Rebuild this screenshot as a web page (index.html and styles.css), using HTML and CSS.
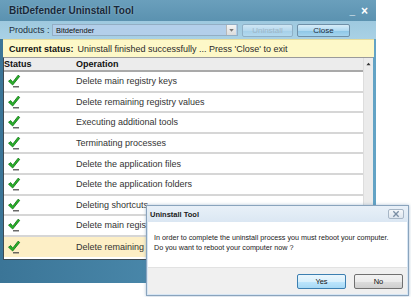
FILE: index.html
```html
<!DOCTYPE html>
<html>
<head>
  <title>BitDefender Uninstall Tool</title>
  <link rel="stylesheet" href="styles.css">
</head>
<body>
  <div class="app">
    <div class="titlebar">
      <span class="app-title">BitDefender Uninstall Tool</span>
      <span class="win-ctrl">_</span>
      <span class="win-ctrl close-x">&#215;</span>
    </div>

    <div class="toolbar">
      <span class="tb-label">Products :</span>
      <div class="combo">
        <span class="combo-text">Bitdefender</span>
        <span class="combo-arrow">
          <svg viewBox="0 0 8 8"><path d="M2 3h4l-2 2.5z" fill="#777"/></svg>
        </span>
      </div>
      <button class="btn disabled">Uninstall</button>
      <button class="btn">Close</button>
    </div>

    <div class="status-strip">
      <b>Current status:</b> Uninstall finished successfully ... Press 'Close' to exit
    </div>

    <div class="list-frame">
      <div class="list">
        <div class="list-head">
          <span class="col-status">Status</span>
          <span>Operation</span>
        </div>
        <div class="row"><span class="col-status"><svg class="check" viewBox="0 0 14 14"><path d="M1.5 7.2l2.2-1.6 2 2.6 5.4-7 1.6 1.2-7 8.6z" fill="#2ab52a" stroke="#0c6e12" stroke-width="0.8" stroke-linejoin="round"/><path d="M6 12.8h6" stroke="#444" stroke-width="1.2"/></svg></span><span>Delete main registry keys</span></div>
        <div class="row"><span class="col-status"><svg class="check" viewBox="0 0 14 14"><path d="M1.5 7.2l2.2-1.6 2 2.6 5.4-7 1.6 1.2-7 8.6z" fill="#2ab52a" stroke="#0c6e12" stroke-width="0.8" stroke-linejoin="round"/><path d="M6 12.8h6" stroke="#444" stroke-width="1.2"/></svg></span><span>Delete remaining registry values</span></div>
        <div class="row"><span class="col-status"><svg class="check" viewBox="0 0 14 14"><path d="M1.5 7.2l2.2-1.6 2 2.6 5.4-7 1.6 1.2-7 8.6z" fill="#2ab52a" stroke="#0c6e12" stroke-width="0.8" stroke-linejoin="round"/><path d="M6 12.8h6" stroke="#444" stroke-width="1.2"/></svg></span><span>Executing additional tools</span></div>
        <div class="row"><span class="col-status"><svg class="check" viewBox="0 0 14 14"><path d="M1.5 7.2l2.2-1.6 2 2.6 5.4-7 1.6 1.2-7 8.6z" fill="#2ab52a" stroke="#0c6e12" stroke-width="0.8" stroke-linejoin="round"/><path d="M6 12.8h6" stroke="#444" stroke-width="1.2"/></svg></span><span>Terminating processes</span></div>
        <div class="row"><span class="col-status"><svg class="check" viewBox="0 0 14 14"><path d="M1.5 7.2l2.2-1.6 2 2.6 5.4-7 1.6 1.2-7 8.6z" fill="#2ab52a" stroke="#0c6e12" stroke-width="0.8" stroke-linejoin="round"/><path d="M6 12.8h6" stroke="#444" stroke-width="1.2"/></svg></span><span>Delete the application files</span></div>
        <div class="row"><span class="col-status"><svg class="check" viewBox="0 0 14 14"><path d="M1.5 7.2l2.2-1.6 2 2.6 5.4-7 1.6 1.2-7 8.6z" fill="#2ab52a" stroke="#0c6e12" stroke-width="0.8" stroke-linejoin="round"/><path d="M6 12.8h6" stroke="#444" stroke-width="1.2"/></svg></span><span>Delete the application folders</span></div>
        <div class="row"><span class="col-status"><svg class="check" viewBox="0 0 14 14"><path d="M1.5 7.2l2.2-1.6 2 2.6 5.4-7 1.6 1.2-7 8.6z" fill="#2ab52a" stroke="#0c6e12" stroke-width="0.8" stroke-linejoin="round"/><path d="M6 12.8h6" stroke="#444" stroke-width="1.2"/></svg></span><span>Deleting shortcuts</span></div>
        <div class="row"><span class="col-status"><svg class="check" viewBox="0 0 14 14"><path d="M1.5 7.2l2.2-1.6 2 2.6 5.4-7 1.6 1.2-7 8.6z" fill="#2ab52a" stroke="#0c6e12" stroke-width="0.8" stroke-linejoin="round"/><path d="M6 12.8h6" stroke="#444" stroke-width="1.2"/></svg></span><span>Delete main registry keys</span></div>
        <div class="row selected"><span class="col-status"><svg class="check" viewBox="0 0 14 14"><path d="M1.5 7.2l2.2-1.6 2 2.6 5.4-7 1.6 1.2-7 8.6z" fill="#2ab52a" stroke="#0c6e12" stroke-width="0.8" stroke-linejoin="round"/><path d="M6 12.8h6" stroke="#444" stroke-width="1.2"/></svg></span><span>Delete remaining registry values</span></div>
      </div>
      <div class="scrollbar">
        <svg class="scroll-up" viewBox="0 0 6 4"><path d="M0.5 3.5h5l-2.5-3z" fill="#333"/></svg>
      </div>
    </div>
  </div>

  <div class="dialog">
    <div class="dlg-title">
      <span class="dlg-caption">Uninstall Tool</span>
      <span class="dlg-close">
        <svg viewBox="0 0 8 6"><path d="M2 1l4 4M6 1l-4 4" stroke="#7a8ea4" stroke-width="1"/></svg>
      </span>
    </div>
    <div class="dlg-body">
      <p>In order to complete the uninstall process you must reboot your computer.</p>
      <p>Do you want to reboot your computer now ?</p>
    </div>
    <div class="dlg-footer">
      <button class="dlg-btn default">Yes</button>
      <button class="dlg-btn">No</button>
    </div>
  </div>
</body>
</html>
```

FILE: styles.css
```css
body {
  margin: 0;
  width: 411px;
  height: 297px;
  position: relative;
  overflow: hidden;
  background: #ffffff;
  font-family: "Liberation Sans", Arial, sans-serif;
  font-size: 9px;
  color: #222;
}

.app {
  width: 376px;
  height: 283px;
  display: flex;
  flex-direction: column;
  background: linear-gradient(to right, #3b7597, #4f8fb2 60%, #63a3c5);
}

.titlebar {
  height: 21px;
  display: flex;
  align-items: center;
  padding: 0 8px 0 9px;
  background: linear-gradient(#6a9fbc, #5b92b0);
  box-sizing: border-box;
}

.app-title {
  flex-grow: 1;
  font-size: 10px;
  font-weight: bold;
  color: #16283a;
  text-shadow: 0 0 2px rgba(255,255,255,0.4);
}

.win-ctrl {
  color: #fff;
  font-weight: bold;
  font-size: 10px;
  margin-left: 6px;
}

.close-x {
  font-size: 12px;
}

.toolbar {
  height: 18px;
  display: flex;
  align-items: center;
  padding: 0 0 0 9px;
  background: linear-gradient(#9ec9df, #a9d1e5);
  box-sizing: border-box;
}

.tb-label {
  width: 43px;
  color: #1e2e3c;
}

.combo {
  width: 186px;
  height: 12px;
  display: flex;
  align-items: center;
  background: #b3cfea;
  border: 1px solid #93aec4;
  box-sizing: border-box;
}

.combo-text {
  flex-grow: 1;
  padding-left: 3px;
  font-size: 7.5px;
  color: #111;
}

.combo-arrow {
  width: 9px;
  height: 10px;
  margin-right: 1px;
  background: linear-gradient(#f4f4f4, #dcdcdc);
  border-left: 1px solid #b8b8b8;
}

.combo-arrow svg {
  display: block;
  width: 9px;
  height: 10px;
}

.btn {
  height: 13px;
  width: 53px;
  margin-left: 4px;
  padding: 0;
  font-family: "Liberation Sans", Arial, sans-serif;
  font-size: 8px;
  color: #1c2c3c;
  border: 1px solid #6f90a8;
  border-radius: 2px;
  background: linear-gradient(#d7ecf8, #b1daf1 50%, #8cc6e6 51%, #a6d4ee);
}

.btn.disabled {
  width: 51px;
  color: #9fb6c6;
  border-color: #8fb0c6;
  background: linear-gradient(#cfe6f4, #b6d9ee 50%, #a4cfe9 51%, #b4d9ee);
}

.status-strip {
  height: 18px;
  margin: 0 2px 0 3px;
  padding-left: 6px;
  display: flex;
  align-items: center;
  gap: 4px;
  background: #fdf8c8;
  border-top: 1px solid #e6dc9c;
  box-sizing: border-box;
  white-space: nowrap;
  color: #2a2a2a;
}

.status-strip b {
  color: #111;
}

.list-frame {
  height: 203px;
  margin: 0 3px 0 3px;
  display: flex;
  background: #fff;
  border-left: 1px solid #3e4a52;
  border-bottom: 1px solid #3e4a52;
  border-top: 1px solid #9a9a9a;
  box-sizing: border-box;
}

.list {
  flex-grow: 1;
  display: flex;
  flex-direction: column;
}

.list-head {
  height: 14px;
  display: flex;
  align-items: center;
  font-weight: bold;
  color: #111;
  background: #ececec;
  border-bottom: 2px solid #a9a9a9;
  box-sizing: border-box;
}

.col-status {
  width: 72px;
  flex-shrink: 0;
  display: flex;
  align-items: center;
}

.row {
  height: 20.6px;
  display: flex;
  align-items: center;
  border-bottom: 2px solid #d6d6d6;
  box-sizing: border-box;
  color: #333;
  white-space: nowrap;
  overflow: hidden;
}

.row.selected {
  background: #fdefc6;
  border-bottom: none;
}

.check {
  width: 14px;
  height: 14px;
  margin-left: 3px;
}

.scrollbar {
  width: 9px;
  flex-shrink: 0;
  background: #ebebeb;
  border-left: 1px solid #dddddd;
}

.scroll-up {
  display: block;
  width: 5px;
  height: 4px;
  margin: 4px auto 0;
}

.dialog {
  position: absolute;
  left: 146px;
  top: 205px;
  width: 263px;
  height: 91px;
  display: flex;
  flex-direction: column;
  background: #d7e6f4;
  border: 1px solid #8aa4bd;
  box-sizing: border-box;
  box-shadow: 0 0 3px rgba(90,130,170,0.5);
}

.dlg-title {
  height: 16px;
  display: flex;
  align-items: center;
  padding: 0 4px 0 3px;
  background: linear-gradient(#e8f0f8, #dbe7f3);
}

.dlg-caption {
  flex-grow: 1;
  font-size: 7.5px;
  font-weight: bold;
  color: #1a1a1a;
}

.dlg-close {
  width: 14px;
  height: 8px;
  border: 1px solid #a7b6c6;
  border-radius: 2px;
  background: linear-gradient(#f4f7fa, #dde5ee);
}

.dlg-close svg {
  display: block;
  width: 14px;
  height: 8px;
}

.dlg-body {
  height: 45px;
  margin: 0 1px;
  padding: 11px 0 0 6px;
  background: #fff;
  box-sizing: border-box;
  font-size: 7.2px;
  line-height: 10px;
  color: #1a1a1a;
}

.dlg-body p {
  margin: 0;
}

.dlg-footer {
  flex-grow: 1;
  margin: 0 1px 1px;
  display: flex;
  justify-content: flex-end;
  align-items: center;
  gap: 8px;
  padding-right: 4px;
  background: #f0f0f0;
  border-top: 1px solid #e2e2e2;
}

.dlg-btn {
  width: 49px;
  height: 15px;
  padding: 0;
  font-family: "Liberation Sans", Arial, sans-serif;
  font-size: 7.5px;
  color: #111;
  border: 1px solid #707070;
  border-radius: 2px;
  background: linear-gradient(#f2f2f2, #ebebeb 50%, #dddddd 51%, #cfcfcf);
}

.dlg-btn.default {
  border-color: #3c7fb1;
  background: linear-gradient(#eaf6fd, #d9f0fc 50%, #bee6fd 51%, #a7d9f5);
}
```
